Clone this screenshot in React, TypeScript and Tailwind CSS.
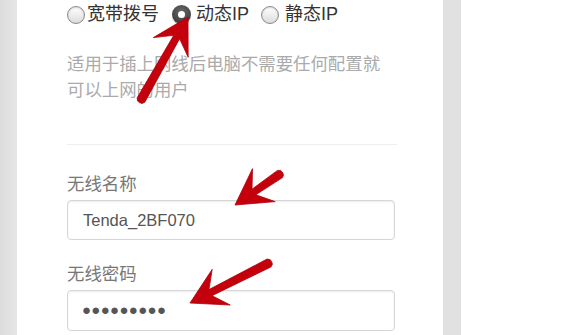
import React from "react";

type Pt = [number, number];

// red annotation arrow, points computed from tail and tip
const arrowPoints = (tail: Pt, tip: Pt) => {
  const dx = tip[0] - tail[0];
  const dy = tip[1] - tail[1];
  const len = Math.hypot(dx, dy);
  const u: Pt = [dx / len, dy / len];
  const n: Pt = [-u[1], u[0]];
  const at = (base: Pt, a: number, b: number): Pt => [base[0] + u[0] * a + n[0] * b, base[1] + u[1] * a + n[1] * b];
  const pts: Pt[] = [
    tip,
    at(tip, -35, 20),
    at(tip, -23, 3.4),
    at(tail, 0, 4.4),
    at(tail, -2.5, 2.6),
    at(tail, -3, 0),
    at(tail, -2.5, -2.6),
    at(tail, 0, -4.4),
    at(tip, -23, -3.4),
    at(tip, -35, -20),
  ];
  return pts.map((p) => p.join(",")).join(" ");
};

const Radio = ({ checked }: { checked?: boolean }) =>
  checked ? (
    <span className="w-[19px] h-[19px] rounded-full bg-[radial-gradient(circle_at_50%_35%,#6a6a6a,#2e2e2e)] flex items-center justify-center shadow-[0_1px_1px_rgba(0,0,0,0.3)]">
      <span className="w-[7px] h-[7px] rounded-full bg-white" />
    </span>
  ) : (
    <span className="w-[18px] h-[18px] rounded-full border border-[#8a8a8a] bg-[linear-gradient(#ffffff,#dcdcdc)] shadow-[inset_0_1px_2px_rgba(0,0,0,0.15)]" />
  );

export default function App() {
  return (
    <div
      className="relative w-[571px] h-[335px] overflow-hidden flex bg-white"
      style={{ fontFamily: '"Liberation Sans", "Noto Sans CJK SC", sans-serif' }}
    >
      <div className="w-[17px] bg-[linear-gradient(90deg,#dcdcdc,#e6e6e6)]" />
      <div className="w-[426px] bg-white pl-[50px]">
        <div className="w-[330px]">
          <div className="flex items-center h-[19px] mt-[5px] text-[18px] text-[#333]">
            <Radio />
            <span className="ml-[2px] mr-[13px]">宽带拨号</span>
            <Radio checked />
            <span className="ml-[5px] mr-[12px]">动态IP</span>
            <Radio />
            <span className="ml-[6px]">静态IP</span>
          </div>
          <p className="mt-[27px] text-[17.4px] leading-[26px] text-[#aaa] w-[320px]">
            适用于插上网线后电脑不需要任何配置就可以上网的用户
          </p>
          <div className="mt-[41px] border-t border-[#eeeeee]" />
          <div className="mt-[27px] text-[17.4px] leading-[24px] text-[#777]">无线名称</div>
          <div className="mt-[4px] w-[328px] h-[40px] rounded-[4px] border border-[#d6d6d6] shadow-[inset_0_1px_2px_rgba(0,0,0,0.08)] flex items-center pl-[15px] text-[16.5px] text-[#555]">
            Tenda_2BF070
          </div>
          <div className="mt-[22px] text-[17.4px] leading-[24px] text-[#777]">无线密码</div>
          <div className="mt-[4px] w-[328px] h-[41px] rounded-[4px] border border-[#d6d6d6] shadow-[inset_0_1px_2px_rgba(0,0,0,0.08)] flex items-center pl-[14px] text-[15px] tracking-[0.3px] text-[#555]">
            ●●●●●●●●●
          </div>
        </div>
      </div>
      <div className="w-[18px] bg-[#e1e1e1]" />
      <div className="flex-1 bg-white" />

      <svg className="absolute inset-0 pointer-events-none" width="571" height="335">
        <g fill="#c3000c" stroke="#b0000a" strokeWidth="0.8" strokeLinejoin="round">
          <polygon points={arrowPoints([141, 100], [188, 17])} />
          <polygon points={arrowPoints([280, 174], [235, 205])} />
          <polygon points={arrowPoints([269, 263], [190, 303])} />
        </g>
      </svg>
    </div>
  );
}
